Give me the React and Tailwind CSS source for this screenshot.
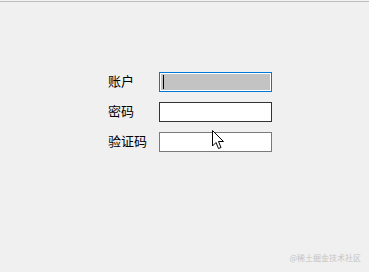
import React from "react";

function Cursor() {
  return (
    <svg
      className="absolute left-[211px] top-[129px]"
      width="14"
      height="22"
      viewBox="0 0 14 22"
    >
      <path
        d="M1.5 1.5 L1.5 17 L5 13.5 L7.5 19.5 L10 18.5 L7.5 12.5 L12.5 12.5 Z"
        fill="#ffffff"
        stroke="#000000"
        strokeWidth="1"
        strokeLinejoin="miter"
      />
    </svg>
  );
}

export default function App() {
  const font = { fontFamily: '"Noto Sans CJK SC", "Noto Sans", sans-serif' };
  return (
    <div className="relative w-[369px] h-[272px] bg-[#f0f0f0] overflow-hidden" style={font}>
      <div className="h-[2px] border-b border-[#bcbcbc] bg-[#f4f4f4]" />
      <div className="pt-[70px] pl-[108px] flex flex-col gap-[10px]">
        <div className="flex items-center">
          <span className="w-[51px] text-[13px] leading-[20px] text-black -translate-y-px">账户</span>
          <div className="w-[113px] h-[20px] border border-[#0078d7] p-px bg-white">
            <div className="h-full bg-[#c3c3c3] flex items-center pl-[2px]">
              <div className="w-px h-[14px] bg-black" />
            </div>
          </div>
        </div>
        <div className="flex items-center">
          <span className="w-[51px] text-[13px] leading-[20px] text-black -translate-y-px">密码</span>
          <div className="w-[113px] h-[20px] border border-[#333333] bg-white" />
        </div>
        <div className="flex items-center">
          <span className="w-[51px] text-[13px] leading-[20px] text-black -translate-y-px">验证码</span>
          <div className="w-[113px] h-[20px] border border-[#7a7a7a] bg-white" />
        </div>
      </div>
      <Cursor />
      <div className="absolute right-[8px] top-[252px] text-[8px] leading-[11px] text-[#c4c4c4]">
        @稀土掘金技术社区
      </div>
    </div>
  );
}
